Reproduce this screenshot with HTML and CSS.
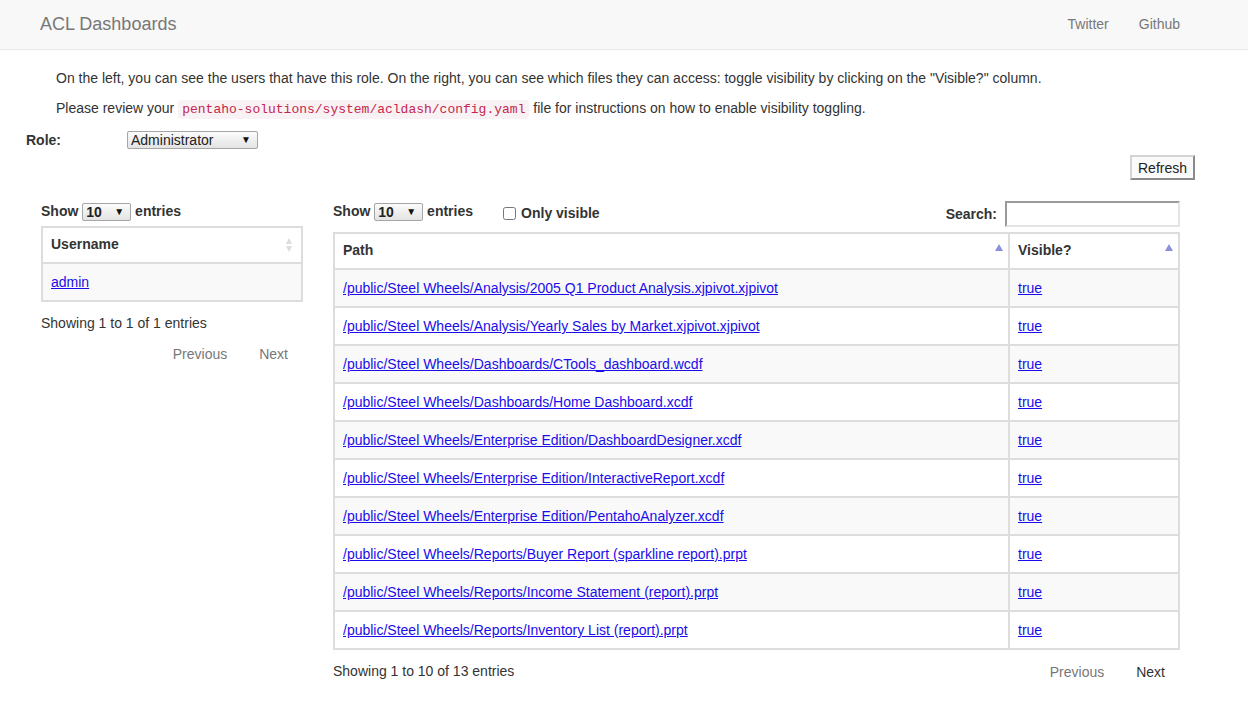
FILE: index.html
```html
<!DOCTYPE html>
<html>
<head>
<meta charset="utf-8">
<title>ACL Dashboards</title>
<link rel="stylesheet" href="styles.css">
</head>
<body>
<nav class="navbar">
  <a class="brand" href="#">ACL Dashboards</a>
  <div class="nav-links">
    <a href="#">Twitter</a>
    <a href="#">Github</a>
  </div>
</nav>

<main class="main">
  <p class="intro">On the left, you can see the users that have this role. On the right, you can see which files they can access: toggle visibility by clicking on the "Visible?" column.</p>
  <p class="intro">Please review your <code>pentaho-solutions/system/acldash/config.yaml</code> file for instructions on how to enable visibility toggling.</p>

  <div class="role-row">
    <label class="role-label">Role:</label>
    <span class="select select-role"><span class="select-text">Administrator</span><span class="select-arrow">▼</span></span>
  </div>

  <div class="refresh-row">
    <button class="btn-refresh" type="button">Refresh</button>
  </div>

  <div class="panels">
    <section class="panel panel-users">
      <div class="dt-top">
        <div class="dt-length">Show <span class="select select-len"><span class="select-text">10</span><span class="select-arrow">▼</span></span> entries</div>
      </div>
      <table class="dt">
        <thead>
          <tr><th class="sortable">Username<span class="sort-both"><i class="up"></i><i class="down"></i></span></th></tr>
        </thead>
        <tbody>
          <tr class="odd"><td><a href="#">admin</a></td></tr>
        </tbody>
      </table>
      <div class="dt-bottom">
        <div class="dt-info">Showing 1 to 1 of 1 entries</div>
        <div class="dt-paging">
          <a class="page disabled">Previous</a><a class="page disabled">Next</a>
        </div>
      </div>
    </section>

    <section class="panel panel-files">
      <div class="dt-top">
        <div class="dt-length">Show <span class="select select-len"><span class="select-text">10</span><span class="select-arrow">▼</span></span> entries</div>
        <label class="only-visible"><input type="checkbox"> Only visible</label>
        <div class="dt-filter"><label>Search:</label><input class="search" type="text"></div>
      </div>
      <table class="dt">
        <thead>
          <tr>
            <th class="sortable">Path<span class="sort-asc"></span></th>
            <th class="sortable col-visible">Visible?<span class="sort-asc"></span></th>
          </tr>
        </thead>
        <tbody>
          <tr class="odd"><td><a href="#">/public/Steel Wheels/Analysis/2005 Q1 Product Analysis.xjpivot.xjpivot</a></td><td><a href="#">true</a></td></tr>
          <tr><td><a href="#">/public/Steel Wheels/Analysis/Yearly Sales by Market.xjpivot.xjpivot</a></td><td><a href="#">true</a></td></tr>
          <tr class="odd"><td><a href="#">/public/Steel Wheels/Dashboards/CTools_dashboard.wcdf</a></td><td><a href="#">true</a></td></tr>
          <tr><td><a href="#">/public/Steel Wheels/Dashboards/Home Dashboard.xcdf</a></td><td><a href="#">true</a></td></tr>
          <tr class="odd"><td><a href="#">/public/Steel Wheels/Enterprise Edition/DashboardDesigner.xcdf</a></td><td><a href="#">true</a></td></tr>
          <tr><td><a href="#">/public/Steel Wheels/Enterprise Edition/InteractiveReport.xcdf</a></td><td><a href="#">true</a></td></tr>
          <tr class="odd"><td><a href="#">/public/Steel Wheels/Enterprise Edition/PentahoAnalyzer.xcdf</a></td><td><a href="#">true</a></td></tr>
          <tr><td><a href="#">/public/Steel Wheels/Reports/Buyer Report (sparkline report).prpt</a></td><td><a href="#">true</a></td></tr>
          <tr class="odd"><td><a href="#">/public/Steel Wheels/Reports/Income Statement (report).prpt</a></td><td><a href="#">true</a></td></tr>
          <tr><td><a href="#">/public/Steel Wheels/Reports/Inventory List (report).prpt</a></td><td><a href="#">true</a></td></tr>
        </tbody>
      </table>
      <div class="dt-bottom">
        <div class="dt-info">Showing 1 to 10 of 13 entries</div>
        <div class="dt-paging">
          <a class="page disabled">Previous</a><a class="page">Next</a>
        </div>
      </div>
    </section>
  </div>
</main>
</body>
</html>
```

FILE: styles.css
```css
* { box-sizing: border-box; }

html, body {
  margin: 0;
  padding: 0;
  background: #fff;
  color: #333;
  font-family: "Liberation Sans", Arial, sans-serif;
  font-size: 14px;
  line-height: 20px;
}

a { color: #1a0dea; }

/* navbar */
.navbar {
  height: 50px;
  background: #f8f8f8;
  border-bottom: 1px solid #e7e7e7;
  display: flex;
  align-items: flex-start;
  justify-content: space-between;
  padding: 0 53px 0 25px;
}
.brand {
  font-size: 18px;
  line-height: 20px;
  padding: 14px 15px 15px;
  color: #777;
  text-decoration: none;
}
.nav-links { display: flex; }
.nav-links a {
  color: #777;
  text-decoration: none;
  padding: 14px 15px 15px;
  line-height: 20px;
}

/* main */
.main {
  padding: 18px 53px 0 26px;
}
.intro {
  margin: 0 0 10px 30px;
}
code {
  font-family: "Liberation Mono", "Courier New", monospace;
  font-size: 13px;
  color: #c7254e;
  background: #f9f2f4;
  padding: 2px 4px;
  border-radius: 4px;
}

.role-row {
  display: flex;
  align-items: center;
  height: 20px;
  margin-top: 2px;
}
.role-label {
  font-weight: bold;
  width: 101px;
}

.select {
  display: inline-flex;
  align-items: center;
  justify-content: space-between;
  height: 18px;
  border: 1px solid #a6a6a6;
  border-radius: 2px;
  background: linear-gradient(#fbfbfb, #e3e3e3);
  padding: 0 6px 0 3px;
  line-height: 16px;
  vertical-align: middle;
  color: #222;
}
.select-arrow {
  font-size: 10px;
  color: #111;
  line-height: 10px;
}
.select-role { width: 131px; }
.select-len { width: 49px; font-weight: bold; }

.refresh-row {
  display: flex;
  justify-content: flex-end;
  margin-top: 5px;
}
.btn-refresh {
  font-family: "Liberation Sans", Arial, sans-serif;
  font-size: 14px;
  color: #222;
  height: 25px;
  width: 65px;
  padding: 0;
  background: #fafafa;
  border: 2px solid;
  border-color: #d4d4d4 #8a8a8a #8a8a8a #d4d4d4;
}

/* panels */
.panels {
  display: flex;
  gap: 30px;
  margin-top: 21px;
  padding: 0 15px;
}
.panel-users { width: 262px; flex: none; }
.panel-files { flex: 1; }

.dt-top {
  display: flex;
  align-items: flex-start;
  margin-bottom: 5px;
}
.dt-length {
  font-weight: bold;
  white-space: nowrap;
}
.only-visible {
  font-weight: bold;
  margin-left: 30px;
  padding-top: 2px;
  display: flex;
  align-items: center;
}
.only-visible input {
  margin: 0 5px 0 0;
  width: 13px;
  height: 13px;
}
.dt-filter {
  margin-left: auto;
  display: flex;
  align-items: flex-start;
  font-weight: bold;
}
.dt-filter label { padding-top: 3px; }
.search {
  margin-left: 8px;
  width: 175px;
  height: 26px;
  border: 2px solid;
  border-color: #9a9a9a #e4e4e4 #e4e4e4 #9a9a9a;
  background: #fff;
  padding: 2px 4px;
}

.dt {
  width: 100%;
  border-collapse: collapse;
}
.dt th, .dt td {
  border: 2px solid #ddd;
  padding: 8px;
  text-align: left;
  vertical-align: middle;
}
.dt th {
  font-weight: bold;
  position: relative;
  padding: 6px 30px 8px 8px;
  background: #fff;
}
.dt tr.odd td { background: #f9f9f9; }
.col-visible { width: 170px; }

.sort-asc {
  position: absolute;
  right: 5px;
  top: 50%;
  margin-top: -7px;
  width: 0;
  height: 0;
  border-left: 4.5px solid transparent;
  border-right: 4.5px solid transparent;
  border-bottom: 7px solid #8a90dc;
}
.sort-both {
  position: absolute;
  right: 9px;
  top: 50%;
  margin-top: -7px;
  display: flex;
  flex-direction: column;
  gap: 2px;
}
.sort-both i {
  display: block;
  width: 0;
  height: 0;
  border-left: 3.5px solid transparent;
  border-right: 3.5px solid transparent;
}
.sort-both .up { border-bottom: 6px solid #dcdcdc; }
.sort-both .down { border-top: 6px solid #dcdcdc; }

.dt-bottom {
  display: flex;
  flex-wrap: wrap;
  align-items: flex-start;
  row-gap: 3px;
  margin-top: 4px;
}
.dt-info {
  padding-top: 7px;
  white-space: nowrap;
}
.dt-paging {
  margin-left: auto;
  display: flex;
}
.page {
  padding: 7px 14px;
  border: 1px solid transparent;
  margin-left: 2px;
  color: #333;
  text-decoration: none;
}
.page.disabled { color: #777; }
```
